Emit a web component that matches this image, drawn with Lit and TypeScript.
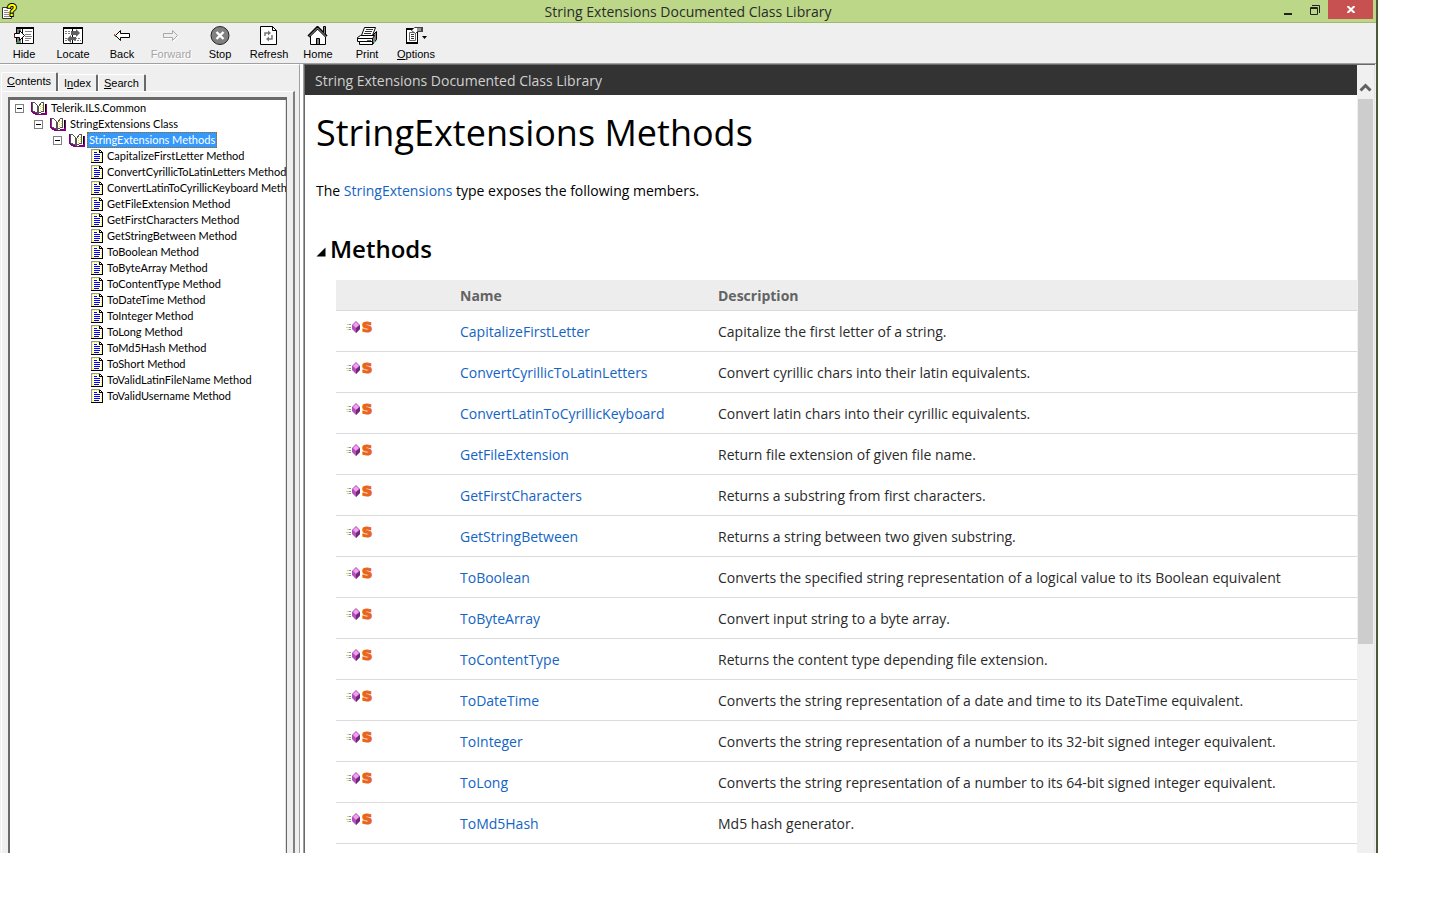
import { LitElement, html, svg, css, nothing, TemplateResult } from "lit";
import { customElement, state } from "lit/decorators.js";
import { classMap } from "lit/directives/class-map.js";

const LIBRARY_TITLE = "String Extensions Documented Class Library";

const ICONS: Record<string, TemplateResult> = {
  Hide: svg`
    <path fill="#fff" stroke="#000" d="M3.5 1.5h17v16h-17z"/>
    <path fill="#000" d="M3 1h18v2h-18z"/>
    <path fill="#808080" d="M4 3h4v14h-4z"/>
    <path stroke="#000" d="M9.5 3v14"/>
    <path stroke="#808080" d="M12 5.5h7M12 8.5h6M12 10.5h7M12 12.5h6M12 14.5h4"/>
    <path fill="#fff" stroke="#000" d="M1.5 7.5h5v-3l5 5-5 5v-3h-5z"/>
    <path fill="#c00" d="M1 9h1v2h-1z"/><path fill="#0c0" d="M3 16h2v1h-2z"/>`,
  Locate: svg`
    <path fill="#fff" stroke="#000" d="M1.5 1.5h19v16h-19z"/>
    <path fill="#000" d="M1 1h20v2h-20z"/>
    <path stroke="#000" d="M10.5 3v14"/>
    <path stroke="#808080" stroke-dasharray="2 1" d="M3 5.5h6M3 7.5h6M3 12.5h4M3 14.5h5M13 12.5h6M12 14.5h7"/>
    <path fill="#606060" d="M9 5h5v-2l4 4-4 4v-2h-5zM14 11h-5v-2l-4 4 4 4v-3h5z"/>`,
  Back: svg`
    <path fill="#fff" stroke="#000" d="M4.500 9.500l5-5v3h9v4h-9v3z"/>
    <path fill="#f33" d="M3 8h1v2h-1z"/><path fill="#0c0" d="M4 10h1v1h-1z"/>`,
  Forward: svg`
    <path fill="none" stroke="#fff" d="M18.500 10.500l-5-5v3h-9v4h9v3z"/>
    <path fill="#efefef" stroke="#a8a8a8" d="M17.500 9.500l-5-5v3h-9v4h9v3z"/>`,
  Stop: svg`
    <circle cx="11" cy="9.500" r="9" fill="#808080" stroke="#222"/>
    <path stroke="#fff" stroke-width="2.400" d="M7.500 6l7 7M14.500 6l-7 7"/>`,
  Refresh: svg`
    <path fill="#fff" stroke="#000" d="M2.500 .5h12l4 4v14h-16z"/>
    <path fill="none" stroke="#000" d="M14.500 .5v4h4"/>
    <path fill="none" stroke="#777" stroke-width="1.500" d="M7 10v-3h4M14 9v4h-4"/>
    <path fill="#777" d="M10 4.500l3 2.500-3 2.500zM11 10.500l-3 2.500 3 2.500z"/>`,
  Home: svg`
    <path fill="#fff" stroke="#000" d="M3.500 9.500v9h15v-9l-7.500-7z"/>
    <path fill="none" stroke="#000" stroke-width="3" d="M1.500 10.500l9-9 9 9"/>
    <path fill="none" stroke="#aaa" d="M2 10.500l8.500-8.500 9 9"/>
    <path fill="#808080" stroke="#000" d="M16.500 6.500v-6h2v8M9.500 18.500v-6h3v6z"/>`,
  Print: svg`
    <path fill="#fff" stroke="#000" d="M5.500 9.500l3-8h11l-3 8z"/>
    <path stroke="#333" d="M10 3.500h7M9 5.500h7M8 7.500h7"/>
    <path fill="#808080" stroke="#000" d="M16.500 9.500l4-4v8l-4 5z"/>
    <path fill="#fff" stroke="#000" d="M1.500 11.500l3-2h14l-2 3v3h-15z"/>
    <path fill="#fff" stroke="#000" d="M3.500 15.500h13v3h-13zM1.500 12.500h15"/>
    <path stroke="#666" d="M11 14.500h4"/><path fill="#0dd" d="M18 15h1v2h-1z"/>`,
  Options: svg`
    <path fill="#fff" stroke="#000" d="M1.500 2.500h11v15h-11z"/>
    <path fill="#000" d="M1 2h9v2h-9zM1 16h12v2h-12z"/>
    <path fill="#fff" stroke="#666" d="M4.500 6.500h6v8h-6z"/>
    <path stroke="#333" d="M6 8.500h3M6 10.500h3M6 12.500h3"/>
    <path fill="#fff" stroke="#444" d="M6.500 4.500l3-3h8v4h-5l-2 2z"/>
    <path fill="#999" d="M12 2h5v3h-5z"/><path fill="#444" d="M16 1h2v5h-2z"/>
    <path fill="#000" d="M17 10h5l-2.500 3z"/>`,
};

const TOOLS = ["Hide", "Locate", "Back", "Forward", "Stop", "Refresh", "Home", "Print", "Options"];

const METHODS: [string, string][] = [
  ["CapitalizeFirstLetter", "Capitalize the first letter of a string."],
  ["ConvertCyrillicToLatinLetters", "Convert cyrillic chars into their latin equivalents."],
  ["ConvertLatinToCyrillicKeyboard", "Convert latin chars into their cyrillic equivalents."],
  ["GetFileExtension", "Return file extension of given file name."],
  ["GetFirstCharacters", "Returns a substring from first characters."],
  ["GetStringBetween", "Returns a string between two given substring."],
  ["ToBoolean", "Converts the specified string representation of a logical value to its Boolean equivalent"],
  ["ToByteArray", "Convert input string to a byte array."],
  ["ToContentType", "Returns the content type depending file extension."],
  ["ToDateTime", "Converts the string representation of a date and time to its DateTime equivalent."],
  ["ToInteger", "Converts the string representation of a number to its 32-bit signed integer equivalent."],
  ["ToLong", "Converts the string representation of a number to its 64-bit signed integer equivalent."],
  ["ToMd5Hash", "Md5 hash generator."],
];

const TOPICS = [...METHODS.map(([name]) => name), "ToShort", "ToValidLatinFileName", "ToValidUsername"];

const bookIcon = html`<svg class="book" viewBox="0 0 16 14" aria-hidden="true">
  <path fill="#800080" d="M0 1h2v9l6 3 3-1h3v-9h2v11h-6l-2 1-3-1-5-3z"/>
  <path fill="#fff" stroke="#555" d="M1.500 9.500v-8h2l3 3v8z"/>
  <path fill="#fff" stroke="#555" d="M7.500 12.500v-7l3-4h2v9h-2z"/>
  <path fill="#e8e000" d="M9 5h1v1h-1zM9 7h1v1h-1zM9 9h1v1h-1zM11 4h1v1h-1zM11 6h1v1h-1zM11 8h1v1h-1z"/>
  <path stroke="#000" d="M14.500 3v8"/>
</svg>`;

const pageIcon = html`<svg class="page" viewBox="0 0 12 14" aria-hidden="true">
  <path fill="#fff" d="M0 0h9l3 3v11h-12z"/>
  <path fill="none" stroke="#ff0" stroke-dasharray="1 1" d="M1.500 12v-10.500h6M10.500 5v8M2 12.500h8"/>
  <path fill="none" stroke="#999" d="M.5 13v-12.500h8"/>
  <path fill="none" stroke="#000" d="M8.500 .5v3h3M11.500 3v10.500h-11.500M9 1.500h1M10 2.500h1"/>
  <path stroke="#00f" d="M3 3.500h3M3 5.500h6M3 7.500h6M3 9.500h6M3 11.500h5"/>
</svg>`;

const methodIcon = html`<svg class="method" viewBox="0 0 28 12" role="img" aria-label="Public static method">
  <path stroke="#dcd67c" d="M1 3.500h3M0 6.500h3M1 8.500h3"/>
  <path stroke="#8a90a8" d="M3 3.500h2M3 6.500h2M3 8.500h2"/>
  <path fill="#b050b8" d="M10 0l4 4v4l-4 4-4-4v-4z"/>
  <path fill="#f0a0f0" d="M10 1l3 3-3 3-3-3z"/>
  <path fill="#702878" d="M10 7l4-3v4l-4 4z"/>
  <text x="16" y="11" class="static-mark">s</text>
</svg>`;

@customElement("app-root")
export class AppRoot extends LitElement {
  @state() private selected = "StringExtensions Methods";
  @state() private tab = "Contents";
  @state() private open = true;

  static styles = css`
    :host {
      display: block;
      box-sizing: border-box;
      height: 100vh;
      padding: 0 62px 47px 0;
      background: #fff;
      color: #000;
      font-family: "Open Sans", "Noto Sans", sans-serif;
    }
    * { box-sizing: border-box; }
    svg { display: block; flex: none; }
    button { border: 0; padding: 0; margin: 0; background: none; color: inherit; font: inherit; }
    a { color: #1364c4; text-decoration: none; }

    .window {
      display: flex;
      flex-direction: column;
      height: 100%;
      border-right: 2px solid #4b5939;
      background: #efefef;
      overflow: hidden;
    }
    .titlebar {
      flex: none;
      display: grid;
      grid-template-columns: 1fr auto 1fr;
      height: 23px;
      background: #bcd788;
      border-bottom: 1px solid #a0b970;
    }
    .app-icon { width: 18px; height: 20px; margin-top: 2px; }
    .query { font: bold 16px "Liberation Sans", sans-serif; fill: #ff0; stroke: #000; stroke-width: 2px; paint-order: stroke; }
    .title { margin: 0; font-size: 14px; line-height: 23px; font-weight: 400; color: #2b2b2b; }
    .controls { display: flex; justify-content: flex-end; padding-right: 3px; }
    .control { width: 27px; height: 19px; }
    .close { width: 45px; background: #c75050; display: grid; place-items: center; }
    .control svg { margin: 0 auto; }

    .toolbar { flex: none; display: flex; height: 40px; font: 11px/12px "Liberation Sans", Arial, sans-serif; }
    .tool { width: 49px; display: flex; flex-direction: column; align-items: center; gap: 2px; padding: 3px 1px 0 0; }
    .tool svg { width: 22px; height: 20px; }
    .tool:disabled { color: #a5a5a5; text-shadow: 1px 1px #fff; }
    .key { text-decoration: underline; }

    .body { flex: 1; min-height: 0; display: flex; border-top: 1px solid #a0a0a0; }

    .nav {
      flex: none;
      width: 300px;
      padding: 7px 4px 0 1px;
      display: flex;
      flex-direction: column;
      border-top: 1px solid #fff;
      border-right: 1px solid #a0a0a0;
      font: 11px/16px Lato, Arial, sans-serif;
    }
    .tabs { display: flex; align-items: flex-end; height: 19px; font-family: "Liberation Sans", Arial, sans-serif; }
    .tab {
      height: 17px;
      padding: 0 5px;
      border-top: 1px solid #fff;
      border-left: 1px solid #fff;
      border-right: 2px solid #696969;
      border-radius: 2px 2px 0 0;
    }
    .tab.current { height: 19px; padding: 0 5px 2px 5px; }
    .tab-page {
      flex: 1;
      min-height: 0;
      padding: 5px 6px 0;
      border: solid #fff;
      border-width: 1px 2px 0 1px;
      border-right-color: #808080;
    }
    .tree-frame {
      height: 100%;
      overflow: hidden;
      background: #fff;
      border: solid #696969;
      border-width: 3px 1px 0 2px;
      box-shadow: inset -1px 0 #e3e3e3;
    }
    .tree { list-style: none; margin: 0; padding: 0; }
    .tree .tree { padding-left: 19px; }
    .tree .topics { padding-left: 23px; }
    .row { display: flex; align-items: center; height: 16px; padding-left: 5px; white-space: nowrap; }
    .toggle { flex: none; width: 9px; height: 9px; margin-right: 7px; border: 1px solid #808080; background: #fff; display: grid; place-items: center; }
    .toggle::before { content: ""; width: 5px; height: 1px; background: #000; }
    .book { width: 16px; height: 14px; margin-right: 2px; }
    .book, .page { shape-rendering: crispEdges; }
    .page { width: 12px; height: 14px; margin: 0 2px 0 15px; }
    .node { flex: none; height: 16px; padding: 0 2px; line-height: 16px; text-align: left; }
    .node.selected { background: #39f; color: #fff; outline: 1px dotted #a60; outline-offset: -1px; }

    .splitter { flex: none; width: 4px; background: #fff; border-right: 1px solid #a0a0a0; }
    .viewer {
      flex: 1;
      min-width: 0;
      display: flex;
      margin-right: 1px;
      border: solid #696969;
      border-width: 1px 0 0 1px;
      background: #fff;
    }
    .doc { flex: 1; min-width: 0; overflow: hidden; }
    .doc-header { height: 30px; padding-left: 10px; background: #333; color: #d0d0d0; font-size: 14px; line-height: 31px; }
    .doc-body { padding: 11px 0 0 11px; font-size: 14px; }
    h1 { margin: 0; font-size: 36px; line-height: 54px; font-weight: 400; }
    .intro { margin: 20px 0 30px; line-height: 22px; }
    h2 { margin: 0; line-height: 34px; }
    .section { display: flex; align-items: center; gap: 4px; font-size: 24px; line-height: 34px; font-weight: 600; }
    .section svg { width: 10px; height: 10px; margin-top: 5px; }
    .methods { width: calc(100% - 20px); margin: 14px 0 0 20px; border-collapse: collapse; table-layout: fixed; color: #2a2a2a; }
    .methods th { height: 30px; padding: 2px 10px 0; background: #ededed; border-bottom: 1px solid #dbdbdb; text-align: left; font-weight: 700; color: #636363; }
    .methods td { height: 41px; padding: 2px 10px 0; border-bottom: 1px solid #dbdbdb; white-space: nowrap; }
    .col-icon { width: 114px; }
    .col-name { width: 258px; }
    .method { width: 28px; height: 12px; margin: 0 0 10px; overflow: visible; }
    .static-mark { font: bold 17px "DejaVu Sans", sans-serif; fill: #e8641b; stroke: #e8641b; stroke-width: 1px; }

    .scrollbar { flex: none; width: 18px; padding: 10px 1px 0; background: #f0f0f0; border-right: 1px solid #e3e3e3; display: flex; flex-direction: column; }
    .scroll-up { flex: none; width: 15px; height: 24px; }
    .thumb { width: 15px; height: 70%; background: #cdcdcd; }
  `;

  private label(name: string) {
    return html`<span class="key">${name[0]}</span>${name.slice(1)}`;
  }

  private node(name: string) {
    return html`<button
      class=${classMap({ node: true, selected: this.selected === name })}
      @click=${() => (this.selected = name)}
    >${name}</button>`;
  }

  private branch(name: string, children: unknown, toggle?: () => void) {
    return html`<li>
      <div class="row">
        <button class="toggle" aria-label="Toggle ${name}" @click=${toggle}></button>${bookIcon}${this.node(name)}
      </div>
      ${children}
    </li>`;
  }

  private renderTree() {
    const topics = this.open
      ? html`<ul class="tree topics">
          ${TOPICS.map((t) => html`<li><div class="row">${pageIcon}${this.node(`${t} Method`)}</div></li>`)}
        </ul>`
      : nothing;
    return html`<ul class="tree">
      ${this.branch(
        "Telerik.ILS.Common",
        html`<ul class="tree">
          ${this.branch(
            "StringExtensions Class",
            html`<ul class="tree">
              ${this.branch("StringExtensions Methods", topics, () => (this.open = !this.open))}
            </ul>`
          )}
        </ul>`
      )}
    </ul>`;
  }

  render() {
    return html`
      <div class="window">
        <header class="titlebar">
          <svg class="app-icon" viewBox="0 0 18 20" aria-hidden="true">
            <path fill="#fff" stroke="#333" d="M2.500 5.500h7l2 2v9h-9z"/>
            <path stroke="#888" d="M4 8.500h4M4 10.500h5M4 12.500h5M4 14.500h5"/>
            <text class="query" x="7" y="14">?</text>
          </svg>
          <div class="title">${LIBRARY_TITLE}</div>
          <div class="controls">
            <button class="control" aria-label="Minimize">
              <svg width="8" height="14"><path fill="#222" d="M0 10h8v2h-8z"/></svg>
            </button>
            <button class="control" aria-label="Restore">
              <svg width="10" height="10"><path fill="none" stroke="#222" d="M2 .5h7.500v7.500M.5 2.500h7v7h-7zM0 3.500h8"/></svg>
            </button>
            <button class="control close" aria-label="Close">
              <svg width="8" height="7"><path stroke="#fff" stroke-width="2" d="M.5 0l7 7M7.500 0l-7 7"/></svg>
            </button>
          </div>
        </header>
        <div class="toolbar" role="toolbar">
          ${TOOLS.map(
            (name) => html`<button class="tool" ?disabled=${name === "Forward"}>
              <svg viewBox="0 0 22 20" aria-hidden="true">${ICONS[name]}</svg>
              <span>${name === "Options" ? this.label(name) : name}</span>
            </button>`
          )}
        </div>
        <div class="body">
          <nav class="nav">
            <div class="tabs" role="tablist">
              ${["Contents", "Index", "Search"].map(
                (name) => html`<button
                  role="tab"
                  aria-selected=${this.tab === name}
                  class=${classMap({ tab: true, current: this.tab === name })}
                  @click=${() => (this.tab = name)}
                >${name === "Index" ? html`I<span class="key">n</span>dex` : this.label(name)}</button>`
              )}
            </div>
            <div class="tab-page"><div class="tree-frame">${this.renderTree()}</div></div>
          </nav>
          <div class="splitter"></div>
          <div class="viewer">
            <main class="doc">
              <div class="doc-header">${LIBRARY_TITLE}</div>
              <div class="doc-body">
                <h1>StringExtensions Methods</h1>
                <p class="intro">The <a href="#StringExtensions">StringExtensions</a> type exposes the following members.</p>
                <h2><button class="section">
                  <svg viewBox="0 0 10 10" aria-hidden="true"><path d="M9.500 .5v9h-9z"/></svg>Methods
                </button></h2>
                <table class="methods">
                  <colgroup><col class="col-icon"><col class="col-name"><col></colgroup>
                  <thead><tr><th></th><th>Name</th><th>Description</th></tr></thead>
                  <tbody>
                    ${METHODS.map(
                      ([name, text]) => html`<tr>
                        <td>${methodIcon}</td>
                        <td><a href="#${name}">${name}</a></td>
                        <td>${text}</td>
                      </tr>`
                    )}
                  </tbody>
                </table>
              </div>
            </main>
            <div class="scrollbar">
              <button class="scroll-up" aria-label="Scroll up">
                <svg width="15" height="18"><path fill="none" stroke="#606060" stroke-width="3" d="M2.500 12.500l5-5 5 5"/></svg>
              </button>
              <div class="thumb"></div>
            </div>
          </div>
        </div>
      </div>
    `;
  }
}
